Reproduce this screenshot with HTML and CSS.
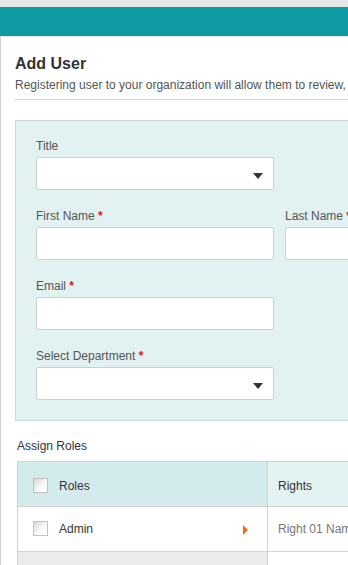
FILE: index.html
```html
<!DOCTYPE html>
<html>

<head>
    <title>Add User</title>
    <meta charset="utf-8">
    <meta name="viewport" content="width=device-width, initial-scale=1.0">
    <link rel="stylesheet" href="styles.css">
</head>

<body>
    <div class="topband"></div>
    <header class="appbar"></header>

    <main class="page">
        <div class="intro">
            <h1>Add User</h1>
            <p>Registering user to your organization will allow them to review, comment and approve documents.</p>
        </div>

        <section class="panel">
            <div class="row">
                <div class="field">
                    <label>Title</label>
                    <div class="box select"><span class="caret"></span></div>
                </div>
            </div>
            <div class="row">
                <div class="field">
                    <label>First Name <b>*</b></label>
                    <div class="box"></div>
                </div>
                <div class="field">
                    <label>Last Name <b>*</b></label>
                    <div class="box"></div>
                </div>
            </div>
            <div class="row">
                <div class="field">
                    <label>Email <b>*</b></label>
                    <div class="box"></div>
                </div>
            </div>
            <div class="row">
                <div class="field">
                    <label>Select Department <b>*</b></label>
                    <div class="box select"><span class="caret"></span></div>
                </div>
            </div>
        </section>

        <h3 class="roles-title">Assign Roles</h3>
        <table class="roles">
            <tr class="head">
                <th class="role"><span class="check"></span>Roles</th>
                <th class="rights">Rights</th>
            </tr>
            <tr>
                <td class="role"><span class="check"></span>Admin<span class="pointer"></span></td>
                <td class="rights muted">Right 01 Name</td>
            </tr>
            <tr class="empty">
                <td class="role"></td>
                <td class="rights"></td>
            </tr>
        </table>
    </main>
</body>

</html>
```

FILE: styles.css
```css
html,
body {
    margin: 0;
    overflow: hidden;
}

body {
    font-family: "Liberation Sans", Arial, sans-serif;
    color: #333;
    background: white;
}

.topband {
    height: 7px;
    background-color: #e8e8e8;
}

.appbar {
    height: 29px;
    background-color: #0f9ba3;
    border-bottom: 1px solid #e4e4e4;
}

.page {
    width: 900px;
    border-left: 1px solid #cfcfcf;
    padding: 17px 0 0 14px;
}

.intro {
    border-bottom: 1px solid #d2d2d2;
    padding-bottom: 6px;
}

.intro h1 {
    margin: 0 0 3px;
    font-size: 16px;
    line-height: 20px;
    font-weight: bold;
    color: #333;
}

.intro p {
    margin: 0;
    font-size: 12px;
    line-height: 16px;
    color: #555;
    white-space: nowrap;
}

.panel {
    margin-top: 20px;
    background-color: #e2f1f2;
    border: 1px solid #cfd6d7;
    padding: 17px 20px 20px;
}

.row {
    display: flex;
    gap: 11px;
    margin-bottom: 18px;
}

.row:last-child {
    margin-bottom: 0;
}

.field {
    width: 238px;
}

.field label {
    display: block;
    font-size: 12px;
    line-height: 16px;
    color: #555;
    margin-bottom: 3px;
    white-space: nowrap;
}

.field label b {
    color: #e8141b;
    font-weight: bold;
}

.box {
    height: 31px;
    background: white;
    border: 1px solid #cfcfcf;
    border-radius: 2px;
    position: relative;
}

.caret {
    position: absolute;
    right: 10px;
    top: 15px;
    width: 0;
    height: 0;
    border-left: 5px solid transparent;
    border-right: 5px solid transparent;
    border-top: 6px solid #333;
}

.roles-title {
    margin: 17px 0 7px 2px;
    font-size: 12px;
    line-height: 16px;
    font-weight: normal;
    color: #333;
}

.roles {
    margin-left: 2px;
    border-collapse: collapse;
    font-size: 12px;
}

.roles th,
.roles td {
    border: 1px solid #d3d3d3;
    height: 44px;
    padding: 0 10px;
    text-align: left;
    font-weight: normal;
    white-space: nowrap;
}

.roles .head th {
    height: 40px;
    padding-top: 4px;
}

.roles .role {
    width: 250px;
    box-sizing: border-box;
    padding-left: 15px;
    position: relative;
}

.roles .rights {
    width: 300px;
}

.head .role {
    background-color: #d4ebee;
}

.head .rights {
    background-color: #e3f2f3;
}

.check {
    display: inline-block;
    width: 13px;
    height: 13px;
    border: 1px solid #c2c2c2;
    background: linear-gradient(135deg, #d8d8d8, #ffffff 70%);
    vertical-align: middle;
    margin-right: 11px;
    margin-top: -2px;
}

.pointer {
    position: absolute;
    right: 19px;
    top: 18px;
    width: 0;
    height: 0;
    border-top: 5px solid transparent;
    border-bottom: 5px solid transparent;
    border-left: 5px solid #f26a10;
}

.muted {
    color: #777;
}

.empty .role {
    background-color: #ebebeb;
}
```
